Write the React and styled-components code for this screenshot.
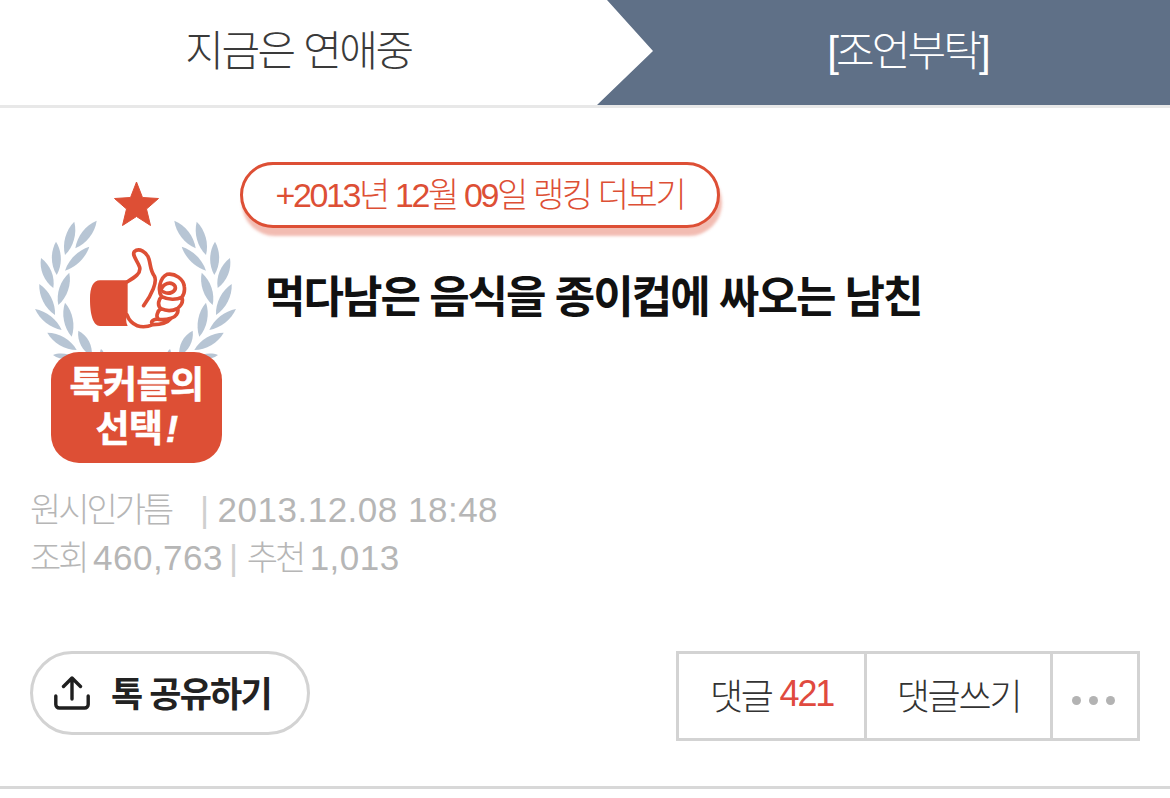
import React from "react";
import styled, { createGlobalStyle } from "styled-components";

const RED = "#dd4f35";
const FONT = `"Liberation Sans", "Noto Sans CJK KR", sans-serif`;

// wreath leaves, base point -> tip point
const LEAVES = [
  [75.3, 248.3, 96.7, 220.7, 5],
  [65, 255, 74.3, 221.7, 5],
  [65, 270.7, 89.3, 246.7, 4.5],
  [56.7, 275, 56, 241.7, 5],
  [53.3, 288, 41, 258, 5],
  [58.3, 305, 69.3, 272.7, 5],
  [55, 315, 39.3, 284, 5],
  [61.7, 330, 35, 309, 4.5],
  [71.7, 336.7, 65, 302.7, 5],
  [76.7, 350, 47.3, 332.7, 5],
  [91.7, 356, 78.3, 330.7, 5],
  [75, 358, 53, 355, 3],
  [103, 358, 101, 349, 2],
];

const leafPath = ([x1, y1, x2, y2, w]) => {
  const dx = x2 - x1;
  const dy = y2 - y1;
  const len = Math.hypot(dx, dy);
  const ox = (-dy / len) * w * 1.2;
  const oy = (dx / len) * w * 1.2;
  const ax = x1 + dx * 0.3;
  const ay = y1 + dy * 0.3;
  const bx = x1 + dx * 0.7;
  const by = y1 + dy * 0.7;
  return `M${x1} ${y1}C${ax + ox} ${ay + oy} ${bx + ox} ${by + oy} ${x2} ${y2}C${bx - ox} ${by - oy} ${ax - ox} ${ay - oy} ${x1} ${y1}Z`;
};

const Wreath = () => (
  <BadgeArt viewBox="30 175 212 185">
    {/* star */}
    <polygon
      fill={RED}
      stroke={RED}
      strokeWidth="1"
      strokeLinejoin="round"
      points="136.5,182 142.5,197.5 158.5,198.5 146.5,209 150.5,225.5 136.5,216.5 122.5,225.5 126.5,209 114.5,198.5 130.5,197.5"
    />
    {/* leaves */}
    <g fill="#b7c5d4">
      {LEAVES.map((leaf) => (
        <path key={leaf.join()} d={leafPath(leaf)} />
      ))}
      <g transform="translate(271 0) scale(-1 1)">
        {LEAVES.map((leaf) => (
          <path key={leaf.join()} d={leafPath(leaf)} />
        ))}
      </g>
    </g>
    {/* thumb */}
    <g transform="translate(85 240) scale(0.3333)">
      <path fill={RED} d="M128 121H45C25 121 15 140 15 178C15 225 25 258 45 258H128C122 245 122 235 128 225Z" />
      <path
        fill="none"
        stroke={RED}
        strokeWidth="11"
        strokeLinecap="round"
        strokeLinejoin="round"
        d="M126 126C150 112 168 100 164 82C158 62 140 46 148 35C162 22 186 36 192 58C198 80 196 92 208 108C218 125 200 165 176 197M126 225C138 258 170 268 204 254C192 244 208 236 222 238M222 238C210 232 218 212 228 206C215 196 222 176 230 170C216 150 226 112 246 103C270 98 296 118 298 140C300 155 296 165 290 172C296 185 288 197 278 205C282 218 272 232 258 235C246 250 222 254 204 254M228 150C234 130 258 122 270 138C276 155 252 165 236 156M230 170C250 180 275 180 290 172M228 206C245 214 265 212 278 205M222 238C235 240 248 238 258 235"
      />
    </g>
  </BadgeArt>
);

const UploadIcon = () => (
  <ShareIcon viewBox="0 0 36 34">
    <path
      fill="none"
      stroke="#1f1f1f"
      strokeWidth="3.4"
      strokeLinecap="round"
      strokeLinejoin="round"
      d="M18 2V23M9.5 10.5L18 2L26.5 10.5M1.8 20V28.5A3.5 3.5 0 0 0 5.3 32H30.7A3.5 3.5 0 0 0 34.2 28.5V20"
    />
  </ShareIcon>
);

const App = () => (
  <>
    <GlobalStyle />
    <Header>
      <Board>지금은 연애중</Board>
      <Category>[조언부탁]</Category>
    </Header>
    <Post>
      <TopRow>
        <Badge>
          <Wreath />
          <BadgeLabel>
            톡커들의
            <br />
            선택<i>!</i>
          </BadgeLabel>
        </Badge>
        <TitleColumn>
          <RankPill>+2013년 12월 09일 랭킹 더보기</RankPill>
          <Title>먹다남은 음식을 종이컵에 싸오는 남친</Title>
        </TitleColumn>
      </TopRow>
      <Meta>
        <MetaLine>
          <Author $width={142}>원시인가틈</Author>
          <Sep $left={28}>|</Sep>
          <span>2013.12.08 18:48</span>
        </MetaLine>
        <MetaLine>
          <Author $width={63}>조회</Author>
          <span>460,763</span>
          <Sep $left={6}>|</Sep>
          <Author $width={63}>추천</Author>
          <span>1,013</span>
        </MetaLine>
      </Meta>
      <Actions>
        <ShareButton>
          <UploadIcon />
          톡 공유하기
        </ShareButton>
        <Tabs>
          <Tab $width={185}>
            댓글 <Count>421</Count>
          </Tab>
          <Tab $width={183}>댓글쓰기</Tab>
          <MoreTab>
            <Dot />
            <Dot />
            <Dot />
          </MoreTab>
        </Tabs>
      </Actions>
    </Post>
  </>
);

const GlobalStyle = createGlobalStyle`
  body {
    margin: 0;
    background: #fff;
    font-family: ${FONT};
  }
`;

// top bar
const Header = styled.header`
  display: flex;
  height: 105px;
  border-bottom: 3px solid #e8e8e8;
`;

const Board = styled.div`
  width: 597px;
  display: flex;
  align-items: center;
  justify-content: center;
  padding-bottom: 10px;
  box-sizing: border-box;
  font-size: 42px;
  font-weight: 300;
  letter-spacing: -2.4px;
  color: #3a3a3a;
`;

const Category = styled.div`
  flex: 1;
  display: flex;
  align-items: center;
  justify-content: center;
  padding: 0 0 10px 48px;
  font-size: 42px;
  font-weight: 300;
  letter-spacing: -2.9px;
  color: #fff;
  background: #5f7087;
  clip-path: polygon(10px 0, 100% 0, 100% 100%, 0 100%, 56px 51px);
`;

// post block
const Post = styled.section`
  padding: 54px 30px 45px;
  border-bottom: 3px solid #d8d8d8;
`;

const TopRow = styled.div`
  display: flex;
`;

const Badge = styled.div`
  width: 210px;
  flex: none;
  margin-top: 13px;
`;

const BadgeArt = styled.svg`
  display: block;
  width: 212px;
  height: 185px;
  margin-bottom: -8px;
`;

const BadgeLabel = styled.div`
  position: relative;
  width: 171px;
  height: 111px;
  margin-left: 21px;
  box-sizing: border-box;
  padding-top: 12px;
  border-radius: 28px;
  background: ${RED};
  color: #fff;
  font-size: 37px;
  font-weight: 700;
  line-height: 44px;
  text-align: center;
  letter-spacing: -0.5px;
  -webkit-text-stroke: 0.6px #fff;

  i {
    font-family: "Liberation Sans", sans-serif;
    margin-left: 3px;
  }
`;

const TitleColumn = styled.div`
  display: flex;
  flex-direction: column;
  align-items: flex-start;
`;

const RankPill = styled.a`
  width: 480px;
  height: 66px;
  box-sizing: border-box;
  display: flex;
  align-items: center;
  justify-content: center;
  padding: 0 0 6px 0;
  border: 3px solid ${RED};
  border-radius: 33px;
  background: #fff;
  box-shadow: 2px 8px 3px rgba(221, 79, 53, 0.38);
  color: ${RED};
  font-size: 34px;
  font-weight: 300;
  letter-spacing: -2.4px;
`;

const Title = styled.h1`
  margin: 42px 0 0 25px;
  font-size: 44px;
  line-height: 56px;
  font-weight: 700;
  letter-spacing: -2px;
  color: #111;
`;

const Meta = styled.div`
  margin-top: 23px;
  color: #b6b6b6;
  font-size: 35px;
  font-weight: 300;
  line-height: 48px;
`;

const MetaLine = styled.div`
  display: flex;
  letter-spacing: 0.5px;
  white-space: pre;
`;

const Author = styled.span`
  width: ${(p) => p.$width}px;
  font-size: 34px;
  letter-spacing: -3px;
`;

const Sep = styled.span`
  color: #cfcfcf;
  margin-left: ${(p) => p.$left}px;
  margin-right: 8px;
`;

const Actions = styled.div`
  display: flex;
  justify-content: space-between;
  align-items: flex-start;
  margin-top: 69px;
`;

const ShareButton = styled.button`
  width: 280px;
  height: 84px;
  display: flex;
  align-items: center;
  gap: 21px;
  padding: 0 0 4px 21px;
  box-sizing: border-box;
  border: 3px solid #d3d3d3;
  border-radius: 42px;
  background: #fff;
  color: #222;
  font-family: ${FONT};
  font-size: 35px;
  font-weight: 700;
  letter-spacing: -1.8px;
`;

const ShareIcon = styled.svg`
  width: 36px;
  height: 34px;
  flex: none;
  margin-top: 4px;
`;

const Tabs = styled.div`
  display: flex;
  height: 90px;
  box-sizing: border-box;
  border: 3px solid #d3d3d3;
`;

const Tab = styled.div`
  width: ${(p) => p.$width}px;
  display: flex;
  align-items: center;
  justify-content: center;
  white-space: pre;
  padding-bottom: 4px;
  border-right: 3px solid #d3d3d3;
  color: #333;
  font-size: 36px;
  font-weight: 300;
  letter-spacing: -2.2px;
`;

const Count = styled.span`
  color: #e04a3f;
`;

const MoreTab = styled.div`
  width: 84px;
  display: flex;
  align-items: center;
  justify-content: center;
  gap: 8px;
  padding: 9px 3px 0 0;
  box-sizing: border-box;
`;

const Dot = styled.span`
  width: 9px;
  height: 9px;
  border-radius: 50%;
  background: #b3b3b3;
`;

export default App;
